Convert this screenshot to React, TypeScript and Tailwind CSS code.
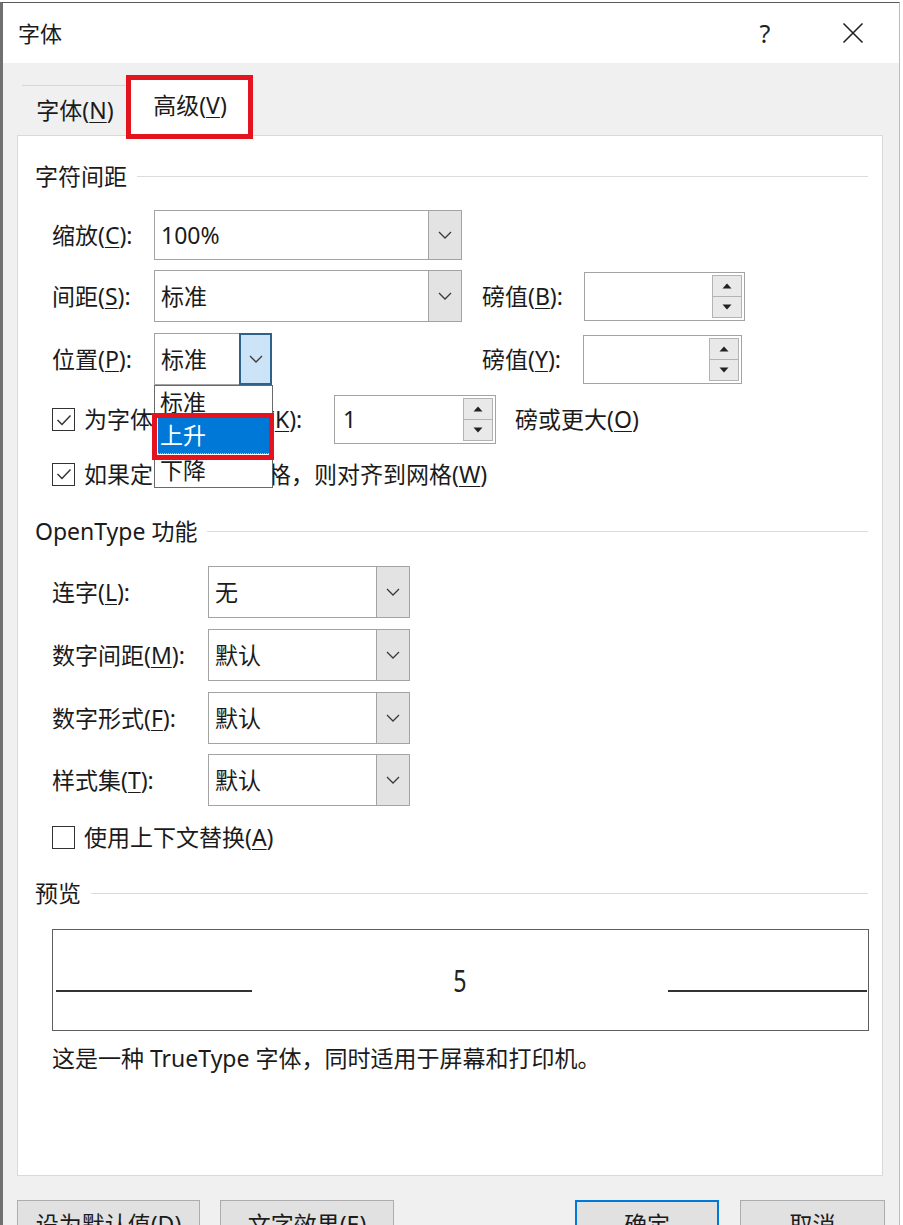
import React from "react";

function U({ c }: { c: string }) {
  return <span className="underline underline-offset-[3px] decoration-1">{c}</span>;
}

function Chevron() {
  return (
    <svg width="14" height="8" viewBox="0 0 14 8">
      <path d="M1 1L7 7L13 1" fill="none" stroke="#3a3a3a" strokeWidth="1.3" />
    </svg>
  );
}

function Combo({ value, cls, focused }: { value: string; cls: string; focused?: boolean }) {
  return (
    <div className={`flex border border-[#a3a3a3] bg-white ${cls}`}>
      <div className="flex-1 flex items-center pl-[6px]">{value}</div>
      {focused ? (
        <div className="w-[33px] flex items-center justify-center bg-[#cce4f7] border-2 border-[#2c628b] -my-px -mr-px">
          <Chevron />
        </div>
      ) : (
        <div className="w-[33px] flex items-center justify-center bg-[#e3e3e3] border-l border-[#a3a3a3]">
          <Chevron />
        </div>
      )}
    </div>
  );
}

function Spin({ value, cls }: { value: string; cls: string }) {
  return (
    <div className={`flex border border-[#a3a3a3] bg-white ${cls}`}>
      <div className="flex-1 flex items-center pl-[8px]">{value}</div>
      <div className="w-[30px] my-[2px] mr-[2px] flex flex-col border border-[#b3b3b3]">
        <div className="flex-1 bg-[#e9e9e9] border-b border-[#b3b3b3] flex items-center justify-center">
          <svg width="10" height="6" viewBox="0 0 10 6">
            <path d="M0.5 5.5L5 0.5L9.5 5.5Z" fill="#222" />
          </svg>
        </div>
        <div className="flex-1 bg-[#e9e9e9] flex items-center justify-center">
          <svg width="10" height="6" viewBox="0 0 10 6">
            <path d="M0.5 0.5L5 5.5L9.5 0.5Z" fill="#222" />
          </svg>
        </div>
      </div>
    </div>
  );
}

function Check({ checked }: { checked?: boolean }) {
  return (
    <div className="w-[23px] h-[23px] border-[1.5px] border-[#333] bg-white flex items-center justify-center shrink-0">
      {checked && (
        <svg width="16" height="12" viewBox="0 0 16 12">
          <path d="M1.5 6L6 10.5L14.5 1.5" fill="none" stroke="#333" strokeWidth="1.5" />
        </svg>
      )}
    </div>
  );
}

function Header({ text, cls }: { text: string; cls: string }) {
  return (
    <div className={`flex items-center h-[28px] pl-[17px] pr-[14px] ${cls}`}>
      <span className="whitespace-nowrap">{text}</span>
      <div className="flex-1 h-px bg-[#dcdcdc] ml-[10px]" />
    </div>
  );
}

export default function App() {
  return (
    <div className="w-[903px] h-[1225px] overflow-hidden bg-white text-[#1b1b1b] text-[23px] leading-none font-['Noto_Sans','Noto_Sans_CJK_SC',sans-serif]">
      <div className="mt-[2px] w-[900px] h-[1300px] border-t border-l-[3px] border-r border-t-[#5a5a5a] border-l-[#707070] border-r-[#bdbdbd] flex flex-col">
        {/* title bar */}
        <div className="h-[60px] bg-white flex items-center pl-[15px] pr-[23px]">
          <span className="text-[22px]">字体</span>
          <div className="ml-auto w-[46px] flex justify-center text-[25px] text-[#222]">?</div>
          <div className="ml-[42px] w-[46px] flex justify-center">
            <svg width="22" height="22" viewBox="0 0 22 22">
              <path d="M1.5 1.5L20.5 20.5M20.5 1.5L1.5 20.5" stroke="#222" strokeWidth="1.6" />
            </svg>
          </div>
        </div>

        {/* body */}
        <div className="flex-1 bg-[#f0f0f0] pt-[14px] pl-[14px] pr-[16px] flex flex-col">
          {/* tabs */}
          <div className="flex items-end h-[58px] pl-[5px]">
            <div className="w-[106px] h-[50px] border-t border-[#d6d6d6] flex items-center justify-center">
              <span>
                字体(<U c="N" />)
              </span>
            </div>
            <div className="relative z-10 -mb-px w-[124px] h-[59px] bg-white flex items-center justify-center">
              <span className="-mt-[3px]">
                高级(<U c="V" />)
              </span>
              <div className="absolute -left-[2px] -top-[2px] w-[127px] h-[64px] border-[5px] border-[#e3141e]" />
            </div>
          </div>

          {/* panel */}
          <div className="w-[866px] h-[1041px] bg-white border border-[#d9d9d9] flex flex-col">
            <Header text="字符间距" cls="mt-[26px]" />

            <div className="mt-[20px] h-[50px] flex items-center pl-[34px]">
              <div className="w-[102px]">
                缩放(<U c="C" />):
              </div>
              <Combo value="100%" cls="w-[308px] h-[50px]" />
            </div>

            <div className="mt-[10px] h-[52px] flex items-center pl-[34px]">
              <div className="w-[102px]">
                间距(<U c="S" />):
              </div>
              <Combo value="标准" cls="w-[308px] h-[52px]" />
              <div className="ml-[20px] w-[102px]">
                磅值(<U c="B" />):
              </div>
              <Spin value="" cls="w-[161px] h-[49px]" />
            </div>

            <div className="mt-[11px] h-[52px] flex items-center pl-[34px] relative z-20">
              <div className="w-[102px]">
                位置(<U c="P" />):
              </div>
              <div className="relative w-[118px] h-[52px]">
                <Combo value="标准" cls="w-[118px] h-[52px]" focused />
                <div className="absolute left-0 top-[52px] w-[119px] h-[103px] bg-white border border-[#6a6a6a] flex flex-col">
                  <div className="h-[32px] flex items-center pl-[5px]">标准</div>
                  <div className="h-[36px] mx-[3px] bg-[#0078d7] text-white flex items-center pl-[2px] border-b border-dotted border-[#9cc8f0]">
                    上升
                  </div>
                  <div className="h-[33px] flex items-center pl-[5px]">下降</div>
                  <div className="absolute -left-[3px] top-[27px] w-[122px] h-[47px] border-[5px] border-[#e3141e]" />
                </div>
              </div>
              <div className="ml-[210px] w-[101px]">
                磅值(<U c="Y" />):
              </div>
              <Spin value="" cls="w-[159px] h-[49px]" />
            </div>

            <div className="mt-[10px] h-[49px] flex items-center pl-[34px]">
              <div className="w-[282px] flex items-center gap-[9px]">
                <Check checked />
                <span className="whitespace-nowrap">
                  为字体调整字间距(<U c="K" />):
                </span>
              </div>
              <Spin value="1" cls="w-[162px] h-[49px]" />
              <div className="ml-[19px]">
                磅或更大(<U c="O" />)
              </div>
            </div>

            <div className="mt-[15px] h-[30px] flex items-center pl-[34px] gap-[9px]">
              <Check checked />
              <span className="whitespace-nowrap">
                如果定义了文档网格，则对齐到网格(<U c="W" />)
              </span>
            </div>

            <Header text="OpenType 功能" cls="mt-[28px]" />

            <div className="mt-[21px] h-[52px] flex items-center pl-[34px]">
              <div className="w-[156px]">
                连字(<U c="L" />):
              </div>
              <Combo value="无" cls="w-[202px] h-[52px]" />
            </div>
            <div className="mt-[11px] h-[52px] flex items-center pl-[34px]">
              <div className="w-[156px]">
                数字间距(<U c="M" />):
              </div>
              <Combo value="默认" cls="w-[202px] h-[52px]" />
            </div>
            <div className="mt-[11px] h-[52px] flex items-center pl-[34px]">
              <div className="w-[156px]">
                数字形式(<U c="F" />):
              </div>
              <Combo value="默认" cls="w-[202px] h-[52px]" />
            </div>
            <div className="mt-[10px] h-[52px] flex items-center pl-[34px]">
              <div className="w-[156px]">
                样式集(<U c="T" />):
              </div>
              <Combo value="默认" cls="w-[202px] h-[52px]" />
            </div>

            <div className="mt-[16px] h-[30px] flex items-center pl-[34px] gap-[9px]">
              <Check />
              <span>
                使用上下文替换(<U c="A" />)
              </span>
            </div>

            <Header text="预览" cls="mt-[27px]" />

            <div className="mt-[22px] ml-[34px] w-[817px] h-[102px] border-[1.5px] border-[#5e5e5e] flex items-start pl-[3px] pr-[1px]">
              <div className="w-[196px] h-[2px] mt-[60px] bg-[#333]" />
              <div className="flex-1 flex justify-center pt-[35px]">
                <span className="text-[31px] inline-block scale-x-75 text-[#222]">5</span>
              </div>
              <div className="w-[199px] h-[2px] mt-[60px] bg-[#333]" />
            </div>

            <div className="mt-[13px] h-[28px] flex items-center pl-[34px]">
              这是一种 TrueType 字体，同时适用于屏幕和打印机。
            </div>
          </div>

          {/* buttons */}
          <div className="mt-[24px] flex">
            <div className="w-[183px] h-[48px] bg-[#e1e1e1] border border-[#adadad] flex items-center justify-center">
              设为默认值(<U c="D" />)
            </div>
            <div className="ml-[20px] w-[174px] h-[48px] bg-[#e1e1e1] border border-[#adadad] flex items-center justify-center">
              文字效果(<U c="E" />)
            </div>
            <div className="ml-auto w-[144px] h-[48px] bg-[#e1e1e1] border-2 border-[#0078d7] flex items-center justify-center">
              确定
            </div>
            <div className="ml-[21px] mr-[-2px] w-[145px] h-[48px] bg-[#e1e1e1] border border-[#adadad] flex items-center justify-center">
              取消
            </div>
          </div>
        </div>
      </div>
    </div>
  );
}
